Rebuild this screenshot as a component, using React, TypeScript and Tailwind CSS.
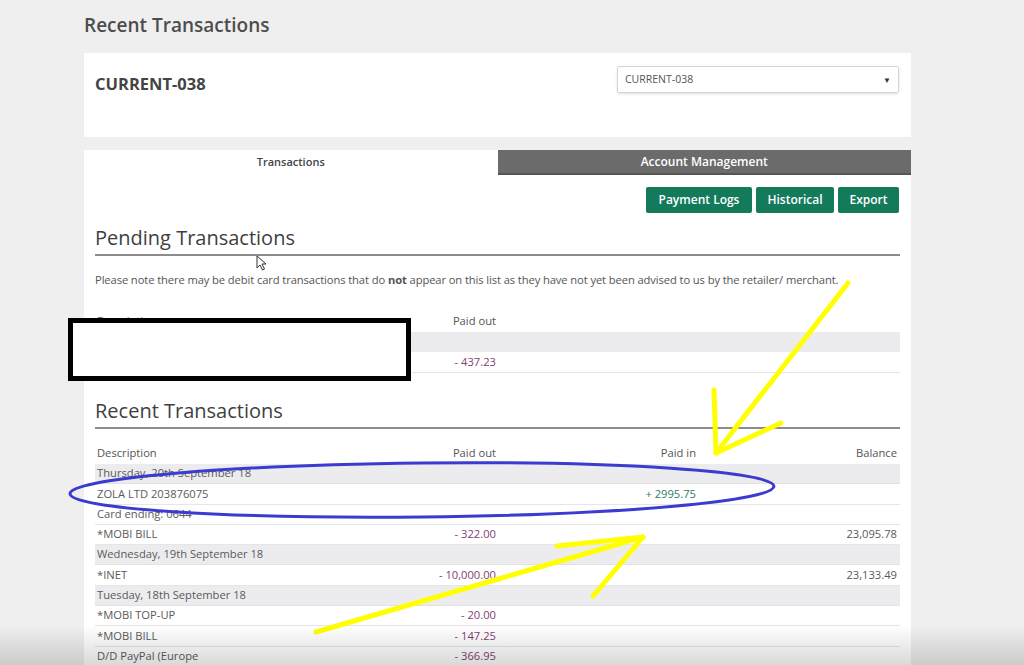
import React from "react"

type Row =
  | { kind: "date"; label: string }
  | { kind: "tx"; desc: string; out?: string; inn?: string; bal?: string }

const RECENT: Row[] = [
  { kind: "date", label: "Thursday, 20th September 18" },
  { kind: "tx", desc: "ZOLA LTD 203876075", inn: "+ 2995.75" },
  { kind: "tx", desc: "Card ending: 0644" },
  { kind: "tx", desc: "*MOBI BILL", out: "- 322.00", bal: "23,095.78" },
  { kind: "date", label: "Wednesday, 19th September 18" },
  { kind: "tx", desc: "*INET", out: "- 10,000.00", bal: "23,133.49" },
  { kind: "date", label: "Tuesday, 18th September 18" },
  { kind: "tx", desc: "*MOBI TOP-UP", out: "- 20.00" },
  { kind: "tx", desc: "*MOBI BILL", out: "- 147.25" },
  { kind: "tx", desc: "D/D PayPal (Europe", out: "- 366.95" },
]

function TableRow({ row }: { row: Row }) {
  if (row.kind === "date") {
    return (
      <div className="h-[20.3px] flex items-center bg-[#ececee] border-b border-[#e2e2e2] px-[2px] text-[#5a5a5a]">
        {row.label}
      </div>
    )
  }
  return (
    <div className="h-[20.3px] grid grid-cols-4 items-center border-b border-[#e6e6e6] pl-[2px] pr-[3px] text-[#5a5a5a]">
      <div>{row.desc}</div>
      <div className="text-right text-[#86406f] pr-[1px]">{row.out}</div>
      <div className="text-right text-[#2f7d62] pr-[1px]">{row.inn}</div>
      <div className="text-right">{row.bal}</div>
    </div>
  )
}

function Heading({ children }: { children: React.ReactNode }) {
  return (
    <div className="border-b-2 border-[#8c8c8c] pb-[2px] text-[20px] leading-[28px] text-[#3f3f3f]">
      {children}
    </div>
  )
}

export default function App() {
  return (
    <div
      className="relative h-[665px] w-[1024px] overflow-hidden bg-[#efefef]"
      style={{ fontFamily: '"Open Sans", "Liberation Sans", sans-serif' }}
    >
      <div className="ml-[84px] w-[827px]">
        <div className="pt-[11px] h-[53px] text-[19px] leading-[28px] font-semibold text-[#4d4d4d]">
          Recent Transactions
        </div>

        {/* account card */}
        <div className="h-[84px] bg-white flex items-start justify-between px-[11px]">
          <div className="mt-[19px] text-[16.5px] font-bold text-[#444]">CURRENT-038</div>
          <div className="mt-[13px] mr-[1px] w-[282px] h-[27px] border border-[#d6d6d6] rounded-[2px] shadow-sm flex items-center justify-between px-[7px] text-[10.5px] text-[#555]">
            <span>CURRENT-038</span>
            <span className="text-[8px] text-[#333]">▼</span>
          </div>
        </div>

        {/* tabs */}
        <div className="mt-[13px] grid grid-cols-2 h-[25px]">
          <div className="bg-white flex items-center justify-center text-[11px] font-semibold text-[#444]">
            Transactions
          </div>
          <div className="bg-[#6b6b6b] border-b-2 border-[#555] flex items-center justify-center text-[12px] font-semibold text-white">
            Account Management
          </div>
        </div>

        {/* main panel */}
        <div className="bg-white h-[500px] px-[11px] pt-[12px] text-[11.2px]">
          <div className="flex justify-end gap-[4px] pr-[1px]">
            <button className="h-[26px] w-[106px] bg-[#137a5c] text-white text-[12px] font-semibold rounded-[2px]">
              Payment Logs
            </button>
            <button className="h-[26px] w-[78px] bg-[#137a5c] text-white text-[12px] font-semibold rounded-[2px]">
              Historical
            </button>
            <button className="h-[26px] w-[61px] bg-[#137a5c] text-white text-[12px] font-semibold rounded-[2px]">
              Export
            </button>
          </div>

          <div className="mt-[11px]">
            <Heading>Pending Transactions</Heading>
          </div>
          <p className="mt-[17px] text-[11.2px] leading-[14px] text-[#555] tracking-[-0.1px]">
            Please note there may be debit card transactions that do <b>not</b> appear on this list as they have not yet been advised to us by the retailer/ merchant.
          </p>

          <div className="mt-[23px]">
            <div className="h-[22px] grid grid-cols-4 items-center pl-[2px] pr-[3px] text-[#555]">
              <div>Description</div>
              <div className="text-right pr-[1px]">Paid out</div>
            </div>
            <div className="h-[20px] bg-[#ececee]" />
            <div className="h-[21px] grid grid-cols-4 items-center border-b border-[#e6e6e6] pl-[2px] pr-[3px] text-[#5a5a5a]">
              <div>Card ending: 0644</div>
              <div className="text-right text-[#86406f] pr-[1px]">- 437.23</div>
            </div>
          </div>

          <div className="mt-[24px]">
            <Heading>Recent Transactions</Heading>
          </div>
          <div className="mt-[14px]">
            <div className="h-[21px] grid grid-cols-4 items-center pl-[2px] pr-[3px] text-[#555]">
              <div>Description</div>
              <div className="text-right pr-[1px]">Paid out</div>
              <div className="text-right pr-[1px]">Paid in</div>
              <div className="text-right">Balance</div>
            </div>
            {RECENT.map((r, i) => (
              <TableRow key={i} row={r} />
            ))}
          </div>
        </div>
      </div>

      {/* redaction box */}
      <div className="absolute left-[68px] top-[318px] w-[343px] h-[63px] bg-white border-[5px] border-black" />

      {/* mouse cursor */}
      <svg className="absolute left-[256px] top-[255px]" width="12" height="16" viewBox="0 0 12 16">
        <path d="M1 1 L1 13 L4 10 L6.5 15 L8.5 14 L6 9 L10 9 Z" fill="white" stroke="#333" strokeWidth="1" />
      </svg>

      {/* annotations */}
      <svg className="absolute left-0 top-0 pointer-events-none" width="1024" height="665">
        <ellipse cx="422" cy="490" rx="352" ry="27" fill="none" stroke="#3b3bd0" strokeWidth="3" transform="rotate(-0.6 422 490)" />
        <g stroke="#ffff00" strokeWidth="5" strokeLinecap="round" fill="none">
          <line x1="848" y1="283" x2="716" y2="453" />
          <line x1="714" y1="390" x2="716" y2="453" />
          <line x1="781" y1="423" x2="716" y2="453" />
          <line x1="316" y1="632" x2="643" y2="537" />
          <line x1="557" y1="546" x2="643" y2="537" />
          <line x1="593" y1="596" x2="643" y2="537" />
        </g>
      </svg>

      {/* bottom vignette */}
      <div className="absolute left-0 right-0 bottom-0 h-[40px] bg-gradient-to-b from-transparent to-black/15 pointer-events-none" />
    </div>
  )
}
